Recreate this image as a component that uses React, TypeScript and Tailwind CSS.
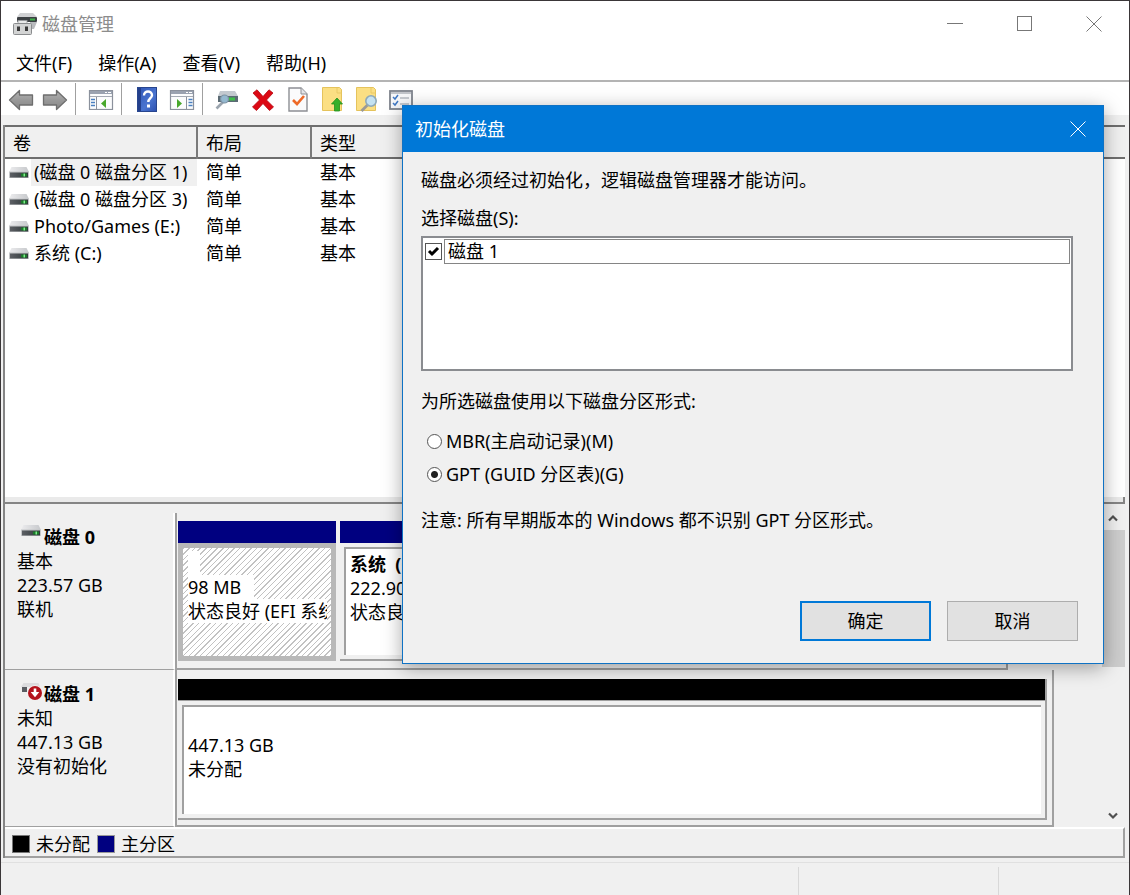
import type { ReactNode } from "react";

const volumes = [
  { name: "(磁盘 0 磁盘分区 1)", layout: "简单", kind: "基本", selected: true },
  { name: "(磁盘 0 磁盘分区 3)", layout: "简单", kind: "基本", selected: false },
  { name: "Photo/Games (E:)", layout: "简单", kind: "基本", selected: false },
  { name: "系统 (C:)", layout: "简单", kind: "基本", selected: false },
];

function DriveIcon() {
  return (
    <svg width="20" height="12" viewBox="0 0 20 12" className="shrink-0" aria-hidden="true">
      <defs>
        <linearGradient id="lid" x1="0" y1="0" x2="1" y2="0">
          <stop offset="0" stopColor="#ececee" />
          <stop offset="1" stopColor="#c6c8cb" />
        </linearGradient>
        <linearGradient id="face" x1="0" y1="0" x2="1" y2="0">
          <stop offset="0" stopColor="#5c5f64" />
          <stop offset="1" stopColor="#30383a" />
        </linearGradient>
      </defs>
      <path d="M2.5 0h15l2.500 5H0z" fill="url(#lid)" />
      <rect y="4.500" width="20" height="6.500" fill="#c4c6c8" />
      <rect x="1" y="5.500" width="18" height="5" fill="url(#face)" />
      <rect x="12" y="6.500" width="6" height="3" fill="#1c7b2a" />
      <rect x="14.500" y="6.500" width="1.500" height="3" fill="#7ff08c" />
    </svg>
  );
}

function AlertDriveIcon() {
  return (
    <svg width="22" height="18" viewBox="0 0 22 18" className="shrink-0" aria-hidden="true">
      <path d="M2.500 1h15l1.500 4H0z" fill="#dcdcde" />
      <rect x="1" y="5" width="5" height="5" fill="#5a5d62" />
      <circle cx="14" cy="11" r="7.800" fill="#f4f0f0" />
      <circle cx="14" cy="11" r="7" fill="#b4121c" />
      <path d="M12.700 6.500h2.600v3.500h3L14 15.200 9.700 10h3z" fill="#fff" />
    </svg>
  );
}

function AppIcon() {
  return (
    <svg width="26" height="24" viewBox="0 0 26 24" aria-hidden="true">
      <path d="M7 1h13l4 4H4z" fill="#d0d1d3" />
      <rect x="4" y="5" width="20" height="5" rx="1" fill="#3d4144" />
      <rect x="17" y="6.500" width="5" height="2" fill="#3fae4a" />
      <path d="M17 10h7l-3 7h-4z" fill="#b9bbbe" />
      <rect x="5" y="8.500" width="9" height="4" fill="#e8e9e9" stroke="#9a9c9e" strokeWidth="0.800" />
      <rect x="0.500" y="11.500" width="18" height="11" rx="1" fill="#d3d4d4" stroke="#8a8c8e" />
      <rect x="4" y="14.500" width="3" height="4.500" fill="#3a3a3a" />
      <rect x="12" y="14.500" width="3" height="4.500" fill="#3a3a3a" />
    </svg>
  );
}

function ArrowIcon({ flip }: { flip?: boolean }) {
  return (
    <svg width="26" height="22" viewBox="0 0 26 22" className={flip ? "-scale-x-100" : ""} aria-hidden="true">
      <defs>
        <linearGradient id="arrow" x1="0" y1="0" x2="0" y2="1">
          <stop offset="0" stopColor="#b4b4b4" />
          <stop offset="0.500" stopColor="#999" />
          <stop offset="1" stopColor="#868686" />
        </linearGradient>
      </defs>
      <path
        d="M1.500 11 11.500 1.500V6H24.500V16H11.500V20.500Z"
        fill="url(#arrow)"
        stroke="#6e6e6e"
        strokeWidth="1.300"
        strokeLinejoin="round"
      />
    </svg>
  );
}

function PaneIcon({ right }: { right?: boolean }) {
  return (
    <svg width="26" height="20" viewBox="0 0 26 20" aria-hidden="true">
      <rect x="1.500" y="0.500" width="23" height="19" fill="#fbfcfd" stroke="#8b919c" strokeWidth="1.200" />
      <rect x="2" y="1" width="22" height="3" fill="#9aa2b0" />
      <rect x="17" y="2" width="2" height="1" fill="#fff" />
      <rect x="20" y="2" width="3" height="1" fill="#fff" />
      <path d="M2 6.500h22" stroke="#a5abb5" />
      <path d={right ? "M17.500 7v12" : "M8.500 7v12"} stroke="#8b919c" />
      <path
        d={right ? "M19.500 9.500h4M19.500 12.500h4M19.500 15.500h4" : "M3 9.500h4M3 12.500h4M3 15.500h4"}
        stroke="#4a7fc0"
        strokeWidth="1.600"
      />
      <path d={right ? "M8 9v9l5-4.500z" : "M18 9v9l-5-4.500z"} fill="#48a82c" />
    </svg>
  );
}

function HelpIcon() {
  return (
    <svg width="20" height="25" viewBox="0 0 20 25" aria-hidden="true">
      <defs>
        <linearGradient id="help" x1="0" y1="0" x2="1" y2="1">
          <stop offset="0" stopColor="#2e54b4" />
          <stop offset="0.600" stopColor="#4a74d0" />
          <stop offset="1" stopColor="#2b4fae" />
        </linearGradient>
      </defs>
      <rect x="0.500" y="0.500" width="19" height="24" fill="url(#help)" stroke="#28468f" />
      <rect x="1" y="1" width="3" height="23" fill="#24408c" />
      <path
        d="M7 8.500C7 5.500 9 4.500 11 4.500S15 5.800 15 8.300C15 11 11.300 11.500 11.300 15"
        fill="none"
        stroke="#fff"
        strokeWidth="2.400"
      />
      <rect x="10" y="17.500" width="3" height="3" fill="#fff" />
    </svg>
  );
}

function ConnectIcon() {
  return (
    <svg width="24" height="20" viewBox="0 0 24 20" aria-hidden="true">
      <path d="M5 1h15l3 5H3z" fill="#c3c9cf" />
      <rect x="3" y="6" width="20" height="6" fill="#5b6b74" />
      <rect x="13" y="7.500" width="7" height="3" fill="#3fc04a" />
      <path d="M8 12 1.500 18.500" stroke="#9ba4ae" strokeWidth="2.600" />
      <circle cx="9.500" cy="9" r="4" fill="#94b8cf" stroke="#7e93a5" strokeWidth="1.200" />
    </svg>
  );
}

function DeleteIcon() {
  return (
    <svg width="22" height="22" viewBox="0 0 22 22" aria-hidden="true">
      <path
        d="M1 4 5 .800 11 7.500 17 .800 21 4 14.500 11 21.500 18 17.500 21.500 11 14.500 4.500 21.500.500 18 7.500 11Z"
        fill="#dc0914"
        stroke="#b5060f"
        strokeWidth="0.800"
      />
    </svg>
  );
}

function CheckPageIcon() {
  return (
    <svg width="20" height="25" viewBox="0 0 20 25" aria-hidden="true">
      <path d="M1 1h12l6 6v17H1z" fill="#fbfbfc" stroke="#8d8f94" strokeWidth="1.400" />
      <path d="M13 1v6h6" fill="#e4e5e8" stroke="#8d8f94" />
      <path d="m5 13 4 4 7-8" fill="none" stroke="#ee6a28" strokeWidth="2.600" />
    </svg>
  );
}

function FolderShape() {
  return (
    <>
      <path d="M.500 .500h17l2 2v21H.500z" fill="#fbdf83" stroke="#e5c35c" />
      <path d="M15 1v5h4.500" fill="none" stroke="#e9c966" />
    </>
  );
}

function FolderUpIcon() {
  return (
    <svg width="22" height="25" viewBox="0 0 22 25" aria-hidden="true">
      <FolderShape />
      <path d="M15 11 20.500 17h-3v7h-5v-7h-3z" fill="#35b02b" stroke="#23901b" strokeWidth="0.800" />
    </svg>
  );
}

function FolderFindIcon() {
  return (
    <svg width="22" height="25" viewBox="0 0 22 25" aria-hidden="true">
      <FolderShape />
      <path d="m11.500 18-6 6" stroke="#9c9a94" strokeWidth="2.800" />
      <circle cx="15" cy="14" r="5.200" fill="#c4e2f2" stroke="#8fa9b8" strokeWidth="1.600" />
    </svg>
  );
}

function ListIcon() {
  return (
    <svg width="24" height="20" viewBox="0 0 24 20" aria-hidden="true">
      <rect x="1" y="1" width="22" height="18" fill="#f7f8fa" stroke="#7e838c" strokeWidth="1.800" />
      <path d="M1 3h22" stroke="#8e939c" />
      <path d="m4 7 2 2 3-4M4 13l2 2 3-4" fill="none" stroke="#3f78c4" strokeWidth="1.500" />
      <path d="M11 8h9M11 14h9" stroke="#b7bbc2" strokeWidth="1.400" />
    </svg>
  );
}

function ToolButton({ label, className, children }: { label: string; className: string; children: ReactNode }) {
  return (
    <button type="button" aria-label={label} className={`flex h-[33px] shrink-0 items-center justify-center pt-[2px] ${className}`}>
      {children}
    </button>
  );
}

function ToolSeparator() {
  return <div className="h-8 w-px shrink-0 bg-[#a0a0a0]" />;
}

function CaptionCross() {
  return (
    <svg width="16" height="16" viewBox="0 0 16 16" aria-hidden="true">
      <path d="m.500 .500 15 15M15.500 .500l-15 15" stroke="currentColor" strokeWidth="1" />
    </svg>
  );
}

function DiskLabel({ icon, name, lines }: { icon: ReactNode; name: string; lines: string[] }) {
  return (
    <div className="w-[170px] shrink-0 border-r-2 border-b border-r-white border-b-[#a0a0a0] pt-3 pl-3 leading-6">
      <div className="flex h-6 items-start pl-1">
        <span className="flex w-[23px]">{icon}</span>
        <h2 className="font-bold">{name}</h2>
      </div>
      {lines.map((line) => (
        <p key={line}>{line}</p>
      ))}
    </div>
  );
}

function Chevron({ up }: { up?: boolean }) {
  return (
    <svg width="10" height="8" viewBox="0 0 10 8" aria-hidden="true">
      <path d={up ? "M1 6.500 5 2.500l4 4" : "M1 1.500l4 4 4-4"} fill="none" stroke="#505050" strokeWidth="2.200" />
    </svg>
  );
}

function StyleOption({ text, checked }: { text: string; checked?: boolean }) {
  return (
    <label className="flex items-center gap-1">
      <input
        type="radio"
        name="style"
        defaultChecked={checked}
        className="size-[15px] appearance-none rounded-full border border-[#555] bg-white checked:bg-[radial-gradient(circle,#222_0_3px,#fff_4px)]"
      />
      {text}
    </label>
  );
}

function InitDialog() {
  return (
    <section
      role="dialog"
      aria-labelledby="dialog-title"
      className="absolute top-[104px] left-[401px] flex h-[559px] w-[702px] flex-col border border-[#0f72c4] bg-[#f0f0f0] shadow-[0_4px_18px_rgba(0,0,0,0.35)]"
    >
      <header className="flex h-[46px] items-center justify-between bg-[#0078d7] pr-[17px] pl-3 text-white">
        <h1 id="dialog-title">初始化磁盘</h1>
        <button type="button" aria-label="关闭">
          <CaptionCross />
        </button>
      </header>
      <div className="flex grow flex-col px-[18px] pt-4 pb-[22px] leading-6">
        <p>磁盘必须经过初始化，逻辑磁盘管理器才能访问。</p>
        <p className="mt-[14px]">选择磁盘(S):</p>
        <div className="mt-[6px] mr-3 h-[135px] border-2 border-[#8a8c90] bg-white pt-px">
          <div className="flex items-center gap-[2px] pl-[2px]">
            <input
              id="disk-1"
              type="checkbox"
              defaultChecked
              className="peer size-[17px] shrink-0 appearance-none border border-[#555] bg-white bg-[url('data:image/svg+xml,%3Csvg%20xmlns=%22http://www.w3.org/2000/svg%22%20viewBox=%220%200%2015%2015%22%3E%3Cpath%20d=%22M3%207l3%203%206-6%22%20fill=%22none%22%20stroke=%22black%22%20stroke-width=%223%22/%3E%3C/svg%3E')]"
            />
            <label htmlFor="disk-1" className="mr-px h-[25px] grow border border-[#858585] pl-[3px] leading-[23px]">
              磁盘 1
            </label>
          </div>
        </div>
        <fieldset className="mt-[18px]">
          <legend>为所选磁盘使用以下磁盘分区形式:</legend>
          <div className="mt-4 flex flex-col gap-[9px] pl-[6px]">
            <StyleOption text="MBR(主启动记录)(M)" />
            <StyleOption text="GPT (GUID 分区表)(G)" checked />
          </div>
        </fieldset>
        <p className="mt-[22px]">注意: 所有早期版本的 Windows 都不识别 GPT 分区形式。</p>
        <div className="mt-auto flex justify-end gap-4 pr-[7px]">
          <button type="button" className="h-10 w-[131px] border-2 border-[#0078d7] bg-[#e1e1e1]">
            确定
          </button>
          <button type="button" className="h-10 w-[131px] border border-[#adadad] bg-[#e1e1e1]">
            取消
          </button>
        </div>
      </div>
    </section>
  );
}

export default function App() {
  return (
    <div className="relative flex min-h-screen flex-col overflow-hidden border-x border-t border-[#3a3638] bg-[#f0f0f0] font-['Noto_Sans','Noto_Sans_CJK_SC',sans-serif] text-lg text-black">
      <header className="flex h-[45px] shrink-0 items-center bg-white pl-3">
        <AppIcon />
        <span className="ml-[3px] text-[#8c8c8c]">磁盘管理</span>
        <div className="ml-auto flex items-center gap-[54px] pr-[27px] text-[#777]">
          <button type="button" aria-label="最小化" className="flex h-4 w-4 items-center">
            <span className="h-px w-full bg-current" />
          </button>
          <button type="button" aria-label="最大化" className="size-[15px] border border-current" />
          <button type="button" aria-label="关闭">
            <CaptionCross />
          </button>
        </div>
      </header>
      <nav className="flex h-[34px] shrink-0 items-center gap-[26px] bg-white pl-[15px]">
        <button type="button">文件(F)</button>
        <button type="button">操作(A)</button>
        <button type="button">查看(V)</button>
        <button type="button">帮助(H)</button>
      </nav>
      <div className="flex h-[35px] shrink-0 items-center border-t-2 border-[#b4b4b4] bg-white pl-[3px]">
        <ToolButton label="后退" className="w-[34px]"><ArrowIcon /></ToolButton>
        <ToolButton label="前进" className="w-[34px]"><ArrowIcon flip /></ToolButton>
        <div className="w-[3px]" />
        <ToolSeparator />
        <ToolButton label="显示/隐藏控制台树" className="w-[45px] pl-1"><PaneIcon /></ToolButton>
        <ToolSeparator />
        <ToolButton label="帮助" className="ml-1 w-[42px]"><HelpIcon /></ToolButton>
        <ToolButton label="显示/隐藏操作窗格" className="w-[34px] pr-[6px]"><PaneIcon right /></ToolButton>
        <ToolSeparator />
        <ToolButton label="连接" className="w-12"><ConnectIcon /></ToolButton>
        <ToolButton label="删除" className="w-6"><DeleteIcon /></ToolButton>
        <ToolButton label="属性" className="w-[46px]"><CheckPageIcon /></ToolButton>
        <ToolButton label="向上" className="w-6"><FolderUpIcon /></ToolButton>
        <ToolButton label="查找" className="w-[44px]"><FolderFindIcon /></ToolButton>
        <ToolButton label="列表" className="w-6"><ListIcon /></ToolButton>
      </div>

      <main className="mt-[10px] mr-1 ml-[2px] flex flex-col border-l-2 border-[#858585]">
        <div className="h-[372px] border-t-2 border-[#6e6e6e] bg-white">
          <table className="w-full table-fixed border-collapse text-left">
            <colgroup>
              <col className="w-[192px]" />
              <col className="w-[114px]" />
              <col />
            </colgroup>
            <thead>
              <tr className="h-[31px] border-b-2 border-[#6e6e6e] bg-[#f0f0f0]">
                <th className="border-r-2 border-[#7a7a7a] p-0 pt-[2px] pl-2 leading-[27px] font-normal">卷</th>
                <th className="border-r-2 border-[#7a7a7a] p-0 pt-[2px] pl-2 leading-[27px] font-normal">布局</th>
                <th className="p-0 pt-[2px] pl-2 leading-[27px] font-normal">类型</th>
              </tr>
            </thead>
            <tbody>
              {volumes.map((v) => (
                <tr key={v.name} className="h-[27px]">
                  <td className="p-0">
                    <div className="flex h-[27px] items-center pl-1">
                      <DriveIcon />
                      <span
                        className={
                          v.selected
                            ? "ml-[2px] grow bg-[#f0f0f0] pl-[3px] leading-[27px] whitespace-nowrap"
                            : "ml-[2px] grow pl-[3px] leading-[27px] whitespace-nowrap"
                        }
                      >
                        {v.name}
                      </span>
                    </div>
                  </td>
                  <td className="p-0 pl-[9px] leading-[27px]">{v.layout}</td>
                  <td className="p-0 pl-[9px] leading-[27px]">{v.kind}</td>
                </tr>
              ))}
            </tbody>
          </table>
        </div>
        <div className="h-[7px] border-r-2 border-b-2 border-[#858585] bg-[#eaeaea]" />

        <div className="mt-[9px] flex">
          <div className="flex min-w-0 grow flex-col">
            <div className="flex h-[157px]">
              <DiskLabel icon={<DriveIcon />} name="磁盘 0" lines={["基本", "223.57 GB", "联机"]} />
              <div className="flex w-[833px] border-r-2 border-b-2 border-l-2 border-[#a0a0a0] pt-2 pl-px">
                <div className="flex w-[158px] shrink-0 flex-col">
                  <div className="h-[22px] bg-[#000080]" />
                  <div className="h-[118px] border-[5px] border-[#b8b8b8]">
                    <div className="h-full overflow-hidden bg-white bg-[repeating-linear-gradient(135deg,#c2c2c2_0_1px,#fff_1px_4px)] pl-[5px] leading-6 whitespace-nowrap">
                      <div className="mt-[3px] h-6 w-3 bg-white" />
                      <p className="w-[66px] bg-white">98 MB</p>
                      <p className="mr-1 overflow-hidden bg-white">状态良好 (EFI 系统分区)</p>
                    </div>
                  </div>
                </div>
                <div className="ml-1 flex min-w-0 grow flex-col">
                  <div className="h-[22px] bg-[#000080]" />
                  <div className="h-[118px] border-r-2 border-b-2 border-[#a0a0a0] p-1">
                    <div className="h-full overflow-hidden border-t-2 border-l-2 border-[#a0a0a0] bg-white pt-[3px] pl-1 leading-6 whitespace-nowrap">
                      <p className="font-bold">系统&nbsp; (C:)</p>
                      <p>222.90 GB NTFS</p>
                      <p>状态良好 (启动, 主分区)</p>
                    </div>
                  </div>
                </div>
              </div>
            </div>
            <div className="flex h-[157px]">
              <DiskLabel icon={<AlertDriveIcon />} name="磁盘 1" lines={["未知", "447.13 GB", "没有初始化"]} />
              <div className="flex w-[879px] flex-col border-r-2 border-b-2 border-l-2 border-[#a0a0a0] pt-[9px] pr-[5px] pl-px">
                <div className="h-[22px] border-r-2 border-b border-[#a0a0a0] bg-black" />
                <div className="h-[119px] border-r-2 border-b-2 border-[#a0a0a0] p-1">
                  <div className="h-full border-t-2 border-l-2 border-[#a0a0a0] bg-white pt-[26px] pl-1 leading-6">
                    <p>447.13 GB</p>
                    <p>未分配</p>
                  </div>
                </div>
              </div>
            </div>
          </div>
          <div className="flex w-[23px] shrink-0 flex-col items-center">
            <button type="button" aria-label="向上滚动" className="flex h-[17px] items-start pt-px pr-[2px]">
              <Chevron up />
            </button>
            <div className="h-[137px] w-full bg-[#cdcdcd]" />
            <button type="button" aria-label="向下滚动" className="mt-auto flex h-[22px] items-center pr-[2px]">
              <Chevron />
            </button>
          </div>
        </div>

        <footer className="flex h-[31px] items-center border-t-2 border-r-2 border-b-2 border-t-white border-r-[#a0a0a0] border-b-[#a0a0a0] pt-[2px] pl-[7px]">
          <span className="size-[18px] border border-[#777] bg-black" />
          <span className="ml-[6px]">未分配</span>
          <span className="ml-[7px] size-[18px] border border-[#999] bg-[#000080]" />
          <span className="ml-[6px]">主分区</span>
        </footer>
      </main>
      <div className="mt-1 flex min-h-8 grow items-stretch border-t border-[#e0e0e0] pt-1">
        <div className="grow border-r border-[#d8d8d8]" />
        <div className="w-[200px] border-r border-[#d8d8d8]" />
        <div className="w-[130px]" />
      </div>

      <InitDialog />
    </div>
  );
}
